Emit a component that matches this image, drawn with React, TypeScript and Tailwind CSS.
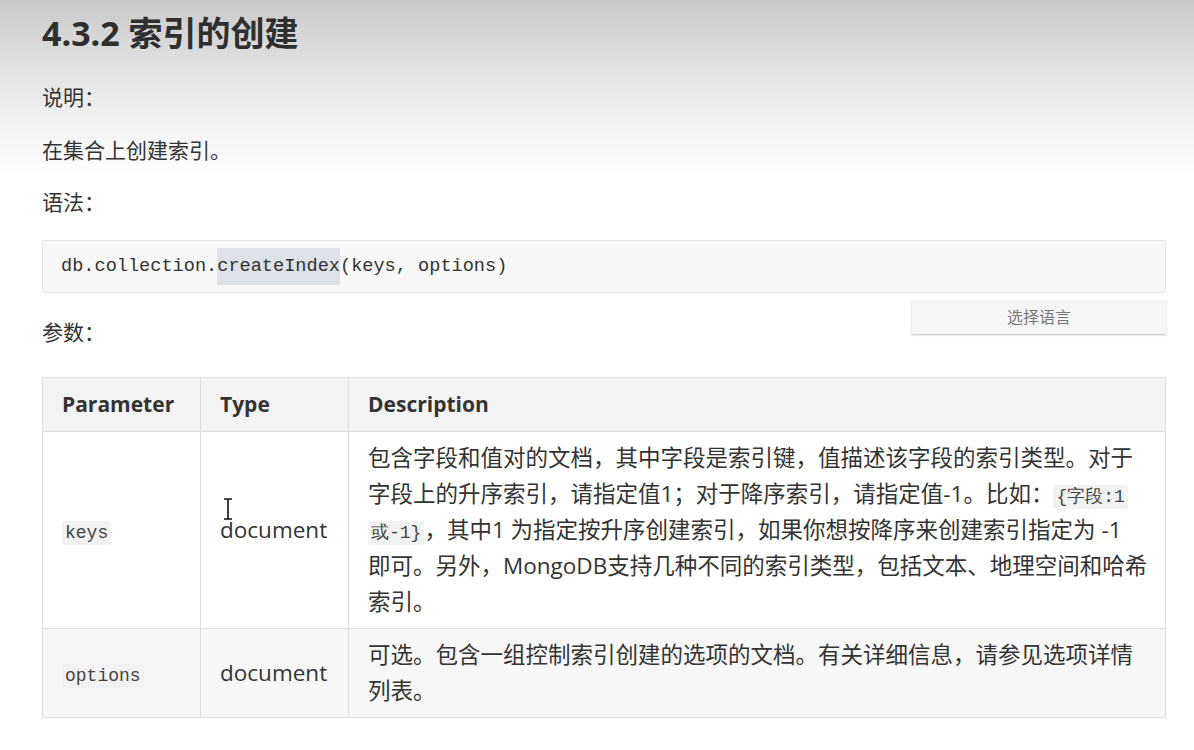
import type { ReactNode } from "react";

const SANS = "font-['Open_Sans','Noto_Sans_CJK_SC',sans-serif]";
const MONO = "font-['Liberation_Mono','DejaVu_Sans_Mono',monospace]";

function Code({ children }: { children: ReactNode }) {
  return (
    <code className={`${MONO} rounded-[3px] bg-[#f2f2f2] px-[3px] py-[2px] text-[18px] leading-none text-[#444]`}>
      {children}
    </code>
  );
}

type Row = {
  name: string;
  type: string;
  description: ReactNode;
  striped?: boolean;
};

// line breaks follow the page as captured
const rows: Row[] = [
  {
    name: "keys",
    type: "document",
    description: (
      <>
        包含字段和值对的文档，其中字段是索引键，值描述该字段的索引类型。对于
        <br />
        字段上的升序索引，请指定值1；对于降序索引，请指定值-1。比如：<Code>{"{字段:1"}</Code>
        <br />
        <Code>{"或-1}"}</Code>，其中1 为指定按升序创建索引，如果你想按降序来创建索引指定为 -1
        <br />
        即可。另外，MongoDB支持几种不同的索引类型，包括文本、地理空间和哈希
        <br />
        索引。
      </>
    ),
  },
  {
    name: "options",
    type: "document",
    description: (
      <>
        可选。包含一组控制索引创建的选项的文档。有关详细信息，请参见选项详情
        <br />
        列表。
      </>
    ),
    striped: true,
  },
];

function IBeam() {
  return (
    <svg
      className="pointer-events-none absolute left-[181px] top-[121px]"
      width="10"
      height="22"
      viewBox="0 0 10 22"
      aria-hidden
    >
      <path d="M1 1h8M1 21h8M5 1v20" stroke="#111" strokeWidth="1.6" fill="none" />
    </svg>
  );
}

export default function App() {
  return (
    <div
      className={`${SANS} min-h-[750px] w-[1194px] bg-[linear-gradient(to_bottom,#c9c9c9_0px,#e9e9e9_90px,#ffffff_175px)] text-[#333]`}
    >
      <div className="ml-[42px] w-[1124px] pt-[13px]">
        <h1 className="text-[34px] font-bold leading-[40px] text-[#2f2f2f]">4.3.2 索引的创建</h1>

        <p className="mt-[28px] text-[21px] leading-[32px]">说明：</p>
        <p className="mt-[21px] text-[21px] leading-[32px]">在集合上创建索引。</p>
        <p className="mt-[20px] text-[21px] leading-[32px]">语法：</p>

        <pre
          className={`${MONO} mt-[22px] flex h-[53px] items-center rounded-[3px] border border-[#e6e6e6] bg-[#f8f8f8] px-[18px] text-[18.6px] text-[#333]`}
        >
          db.collection.<span className="bg-[#dde2e9] py-[5px]">createIndex</span>(keys, options)
        </pre>

        <div className="flex items-start justify-between">
          <p className="mt-[23px] text-[21px] leading-[32px]">参数：</p>
          <button
            type="button"
            className="mt-[7px] h-[34px] w-[254px] bg-[#f5f5f5] text-[16px] text-[#777] shadow-[0_1px_2px_rgba(0,0,0,0.25)]"
          >
            选择语言
          </button>
        </div>

        <div className="relative mt-[29px]">
          <table className="w-full border-collapse border border-[#dedede] text-[22.5px]">
            <thead>
              <tr className="h-[54px] bg-[#f3f3f3] text-left text-[21px] font-bold">
                <th className="w-[158px] border border-[#dedede] pl-[19px]">Parameter</th>
                <th className="w-[148px] border border-[#dedede] pl-[19px]">Type</th>
                <th className="border border-[#dedede] pl-[19px]">Description</th>
              </tr>
            </thead>
            <tbody>
              {rows.map((row) => (
                <tr key={row.name} className={row.striped ? "bg-[#f7f7f7]" : "bg-white"}>
                  <td className="border border-[#dedede] pl-[19px] align-middle">
                    <Code>{row.name}</Code>
                  </td>
                  <td className="border border-[#dedede] pl-[19px] align-middle">{row.type}</td>
                  <td className="whitespace-nowrap border border-[#dedede] py-[8px] pl-[19px] pr-[10px] leading-[36px]">
                    {row.description}
                  </td>
                </tr>
              ))}
            </tbody>
          </table>
          <IBeam />
        </div>
      </div>
    </div>
  );
}
